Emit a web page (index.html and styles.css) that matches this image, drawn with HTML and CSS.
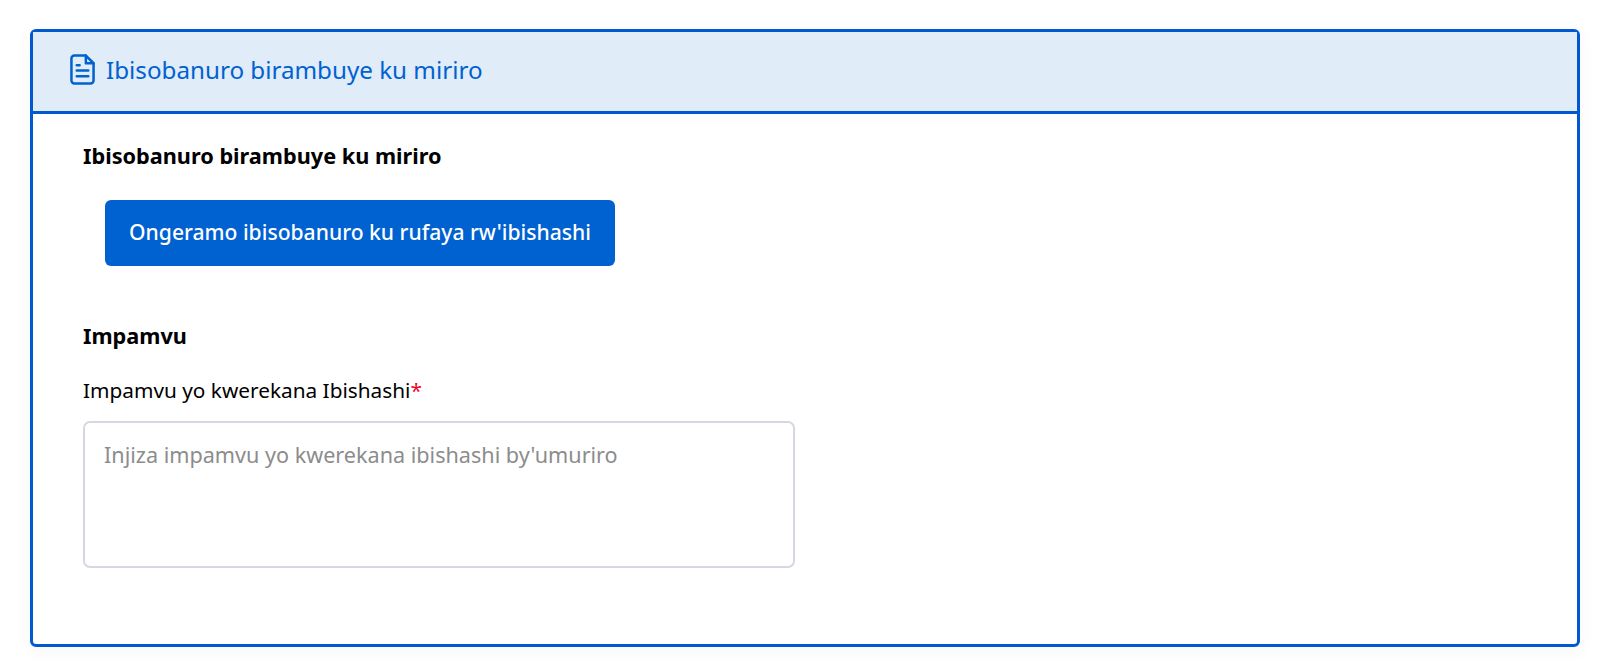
FILE: index.html
```html
<!DOCTYPE html>
<html>
<head>
    <title>Ibisobanuro</title>
    <link rel="stylesheet" href="styles.css">
</head>
<body>
    <div class="card">
        <div class="card-header">
            <svg class="doc-icon" width="25" height="31" viewBox="0 0 26 32" fill="none" stroke="#0061d1" stroke-width="2.6" stroke-linejoin="round" stroke-linecap="round">
                <path d="M4.5 1.5H16.5L24.5 9.5V27.5a3 3 0 0 1-3 3H4.5a3 3 0 0 1-3-3V4.5a3 3 0 0 1 3-3Z"/>
                <path d="M16.5 1.5V9.5H24.5" />
                <path d="M7 11.5H10M7 17H19M7 23H19"/>
            </svg>
            <span>Ibisobanuro birambuye ku miriro</span>
        </div>
        <div class="card-body">
            <h3 class="section-title">Ibisobanuro birambuye ku miriro</h3>
            <button class="primary-btn">Ongeramo ibisobanuro ku rufaya rw'ibishashi</button>
            <h3 class="section-title reason-title">Impamvu</h3>
            <label class="field-label" for="reason">Impamvu yo kwerekana Ibishashi<span class="required">*</span></label>
            <textarea id="reason" class="field-input" placeholder="Injiza impamvu yo kwerekana ibishashi by'umuriro"></textarea>
        </div>
    </div>
</body>
</html>
```

FILE: styles.css
```css
body {
    margin: 0;
    padding: 29px 20px 25px 30px;
    background: #fff;
    font-family: "Noto Sans", sans-serif;
    color: #000;
}
.card {
    border: 3px solid #0059d1;
    border-radius: 6px;
    height: 618px;
    box-sizing: border-box;
    box-shadow: 0 4px 20px rgba(0,0,0,0.04);
}
.card-header {
    display: flex;
    align-items: center;
    gap: 11px;
    height: 74px;
    padding-left: 37px;
    padding-bottom: 5px;
    background: #e0ecf8;
    border-bottom: 3px solid #0059d1;
    color: #0061d1;
    font-size: 24.2px;
}
.card-body {
    padding: 28px 50px 0;
}
.section-title {
    margin: 0;
    font-size: 21.7px;
    line-height: 28px;
    font-weight: 700;
}
.primary-btn {
    display: block;
    width: 510px;
    height: 66px;
    margin: 30px 0 0 22px;
    padding: 0 0 3px;
    border: 0;
    border-radius: 6px;
    background: #0061d1;
    color: #fff;
    font-family: inherit;
    font-size: 21.1px;
    font-weight: 500;
}
.reason-title {
    margin-top: 56px;
}
.field-label {
    display: block;
    margin-top: 26px;
    font-size: 20.8px;
    line-height: 28px;
}
.required {
    color: #f5002d;
}
.field-input {
    display: block;
    box-sizing: border-box;
    width: 712px;
    height: 147px;
    margin-top: 17px;
    padding: 17px 19px;
    border: 2px solid #d3d8e2;
    border-radius: 7px;
    font-family: inherit;
    font-size: 21.6px;
    resize: none;
}
.field-input::placeholder {
    color: #8c8c8c;
}
```
